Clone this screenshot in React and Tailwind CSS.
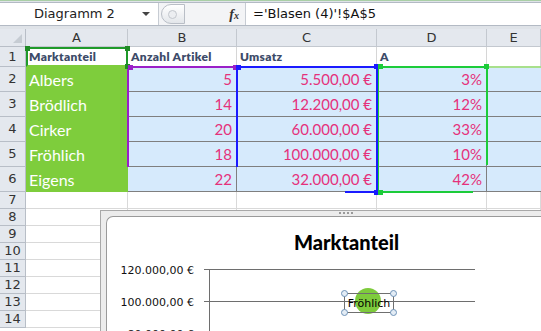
import React from "react";

const COLS = ["A", "B", "C", "D", "E"];
const COLW = ["w-[102px]", "w-[109px]", "w-[140px]", "w-[110px]", "w-[54px]"];

const data = [
  ["Albers", "5", "5.500,00 €", "3%"],
  ["Brödlich", "14", "12.200,00 €", "12%"],
  ["Cirker", "20", "60.000,00 €", "33%"],
  ["Fröhlich", "18", "100.000,00 €", "10%"],
  ["Eigens", "22", "32.000,00 €", "42%"],
];

function RowHead({ n, h }) {
  return (
    <div className={`w-[26px] ${h} shrink-0 bg-[#e4e8ee] border-r border-b border-[#b8bec7] flex items-center justify-center text-[13px] text-[#333]`}>
      {n}
    </div>
  );
}

function Handle({ x, y, color }) {
  return <div className={`absolute w-[5px] h-[5px] ${color}`} style={{ left: x - 2, top: y - 2 }} />;
}

function Chart() {
  return (
    <div className="absolute left-[100px] top-[210px] w-[460px] h-[140px] border-l border-t border-[#a8a8a8] bg-[#ececec] pl-[5px] pt-[5px]">
      <div className="absolute left-[238px] top-[1px] flex gap-[2px]">
        {[0, 1, 2, 3].map(i => <div key={i} className="w-[2px] h-[2px] bg-[#9a9a9a]" />)}
      </div>
      <div className="relative h-full bg-white border-l border-t border-[#9a9a9a] rounded-tl-[7px]">
        <div className="flex justify-center pl-[26px] pt-[12px] text-[20px] font-black text-black font-['Lato',sans-serif] leading-[26px]">
          Marktanteil
        </div>
        <svg className="absolute left-0 top-0" width="455" height="135">
          <text x="87" y="57" textAnchor="end" fontSize="11" fontFamily="DejaVu Sans, sans-serif" fill="#111">120.000,00 €</text>
          <text x="87" y="89" textAnchor="end" fontSize="11" fontFamily="DejaVu Sans, sans-serif" fill="#111">100.000,00 €</text>
          <text x="87" y="121" textAnchor="end" fontSize="11" fontFamily="DejaVu Sans, sans-serif" fill="#111">80.000,00 €</text>
          <line x1="97" y1="52.5" x2="368" y2="52.5" stroke="#6e6e6e" />
          <line x1="97" y1="84.5" x2="368" y2="84.5" stroke="#6e6e6e" />
          <line x1="97" y1="116.5" x2="102" y2="116.5" stroke="#6e6e6e" />
          <line x1="102.5" y1="52" x2="102.5" y2="135" stroke="#6e6e6e" />
          <circle cx="261" cy="84" r="13" fill="#7ecb3c" />
          <rect x="237.5" y="76.5" width="49" height="19" fill="none" stroke="#6f6f6f" />
          <text x="262" y="90" textAnchor="middle" fontSize="11" fontFamily="DejaVu Sans, sans-serif" fill="#000">Fröhlich</text>
          {[[237.5, 76.5], [286.5, 76.5], [237.5, 95.5], [286.5, 95.5]].map(([cx, cy], i) => (
            <circle key={i} cx={cx} cy={cy} r="3" fill="#e3ecf5" stroke="#6f93b8" />
          ))}
        </svg>
      </div>
    </div>
  );
}

export default function App() {
  return (
    <div className="relative w-[541px] h-[331px] overflow-hidden bg-white font-['DejaVu_Sans',sans-serif]">
      {/* formula bar */}
      <div className="h-[29px] bg-[#dfe3e8] border-t border-[#a9cfa6] pt-[1px]">
        <div className="h-[24px] flex bg-white border-y border-[#b3bac4]">
          <div className="w-[158px] flex items-center justify-between pl-[34px] pr-[8px] text-[13px] text-[#222]">
            Diagramm 2
            <span className="w-0 h-0 border-l-[4px] border-r-[4px] border-t-[4px] border-l-transparent border-r-transparent border-t-[#444]" />
          </div>
          <div className="w-[87px] bg-[#f3f4f6] border-l border-[#c7ccd3] flex items-center justify-between pl-[2px] pr-[6px]">
            <div className="w-[24px] h-[20px] rounded-l-full border border-[#b9bec6] bg-gradient-to-b from-white to-[#e3e6ea] flex items-center pl-[6px]">
              <div className="w-[9px] h-[9px] rounded-full border border-[#c3c7cd] bg-[#eceef1]" />
            </div>
            <span className="text-[14px] italic font-bold text-[#333] font-['Liberation_Serif',serif]">f<span className="text-[10px]">x</span></span>
          </div>
          <div className="flex-1 border-l border-[#c7ccd3] flex items-center pl-[7px] text-[13px] text-[#111]">
            ='Blasen (4)'!$A$5
          </div>
        </div>
      </div>

      {/* column headers */}
      <div className="flex h-[18px]">
        <div className="w-[26px] shrink-0 bg-[#e4e8ee] border-r border-b border-[#b8bec7] flex items-end justify-end p-[3px]">
          <span className="w-0 h-0 border-b-[9px] border-l-[9px] border-b-[#c6ccd3] border-l-transparent" />
        </div>
        {COLS.map((c, i) => (
          <div key={c} className={`${COLW[i]} shrink-0 bg-[#e4e8ee] border-r border-b border-[#c3c8cf] flex items-center justify-center text-[13px] text-[#333]`}>
            {c}
          </div>
        ))}
      </div>

      {/* row 1 */}
      <div className="flex h-[20px]">
        <RowHead n={1} h="h-[20px]" />
        {["Marktanteil", "Anzahl Artikel", "Umsatz", "A", ""].map((t, i) => (
          <div key={i} className={`${COLW[i]} shrink-0 border-r border-b border-[#d6d6d6] flex items-center pl-[3px] text-[12px] font-extrabold tracking-[0.3px] text-[#3d4b69] font-['Lato',sans-serif]`}>
            {t}
          </div>
        ))}
      </div>

      {/* data rows */}
      {data.map((r, ri) => (
        <div key={ri} className="flex h-[25px]">
          <RowHead n={ri + 2} h="h-[25px]" />
          <div className="w-[102px] shrink-0 bg-[#7ecd3c] flex items-center pl-[3px] text-[16px] text-white font-['Lato',sans-serif]">
            {r[0]}
          </div>
          {r.slice(1).map((v, ci) => (
            <div key={ci} className={`${COLW[ci + 1]} shrink-0 bg-[#d6eafc] border-r border-b border-[#7f7f7f] flex items-center justify-end pr-[4px] text-[15px] text-[#e5317b] font-['Lato',sans-serif]`}>
              {v}
            </div>
          ))}
          <div className="w-[54px] shrink-0 bg-[#d6eafc] border-b border-[#7f7f7f]" />
        </div>
      ))}

      {/* empty rows */}
      {[7, 8, 9, 10, 11, 12, 13, 14].map(n => (
        <div key={n} className="flex h-[17px]">
          <RowHead n={n} h="h-[17px]" />
          {COLS.map((c, i) => (
            <div key={c} className={`${COLW[i]} shrink-0 border-r border-b border-[#d9d9d9]`} />
          ))}
        </div>
      ))}

      {/* range highlights of the selected chart */}
      <div className="absolute left-[26px] top-[47px] w-[102px] h-[20px] border-2 border-[#1f9a2a] border-b-[#7ecd3c]" />
      <div className="absolute left-[127px] top-[66px] w-[111px] h-[101px] border-t-2 border-l-2 border-[#9a20c8]" />
      <div className="absolute left-[236px] top-[66px] w-[142px] h-[101px] border-t-2 border-l-2 border-[#1a1aff]" />
      <div className="absolute left-[345px] top-[66px] w-[33px] h-[127px] border-r-2 border-b-2 border-[#1a1aff]" />
      <div className="absolute left-[378px] top-[66px] w-[110px] h-[99px] border-t-2 border-l border-r-2 border-[#1ccc3a]" />
      <div className="absolute left-[378px] top-[165px] w-[95px] h-[28px] border-l border-b-2 border-[#1ccc3a]" />
      <div className="absolute left-[488px] top-[66px] w-[53px] h-[2px] bg-[#a8e08c]" />
      <Handle x={27} y={48} color="bg-[#1f8a25]" />
      <Handle x={127} y={48} color="bg-[#1f8a25]" />
      <Handle x={127} y={66} color="bg-[#1f8a25]" />
      <Handle x={130} y={67} color="bg-[#9a20c8]" />
      <Handle x={235} y={67} color="bg-[#9a20c8]" />
      <Handle x={238} y={67} color="bg-[#1a1aff]" />
      <Handle x={376} y={66} color="bg-[#1a1aff]" />
      <Handle x={380} y={66} color="bg-[#1ccc3a]" />
      <Handle x={486} y={66} color="bg-[#1ccc3a]" />
      <Handle x={376} y={192} color="bg-[#1a1aff]" />
      <Handle x={380} y={192} color="bg-[#1ccc3a]" />

      <Chart />
    </div>
  );
}
